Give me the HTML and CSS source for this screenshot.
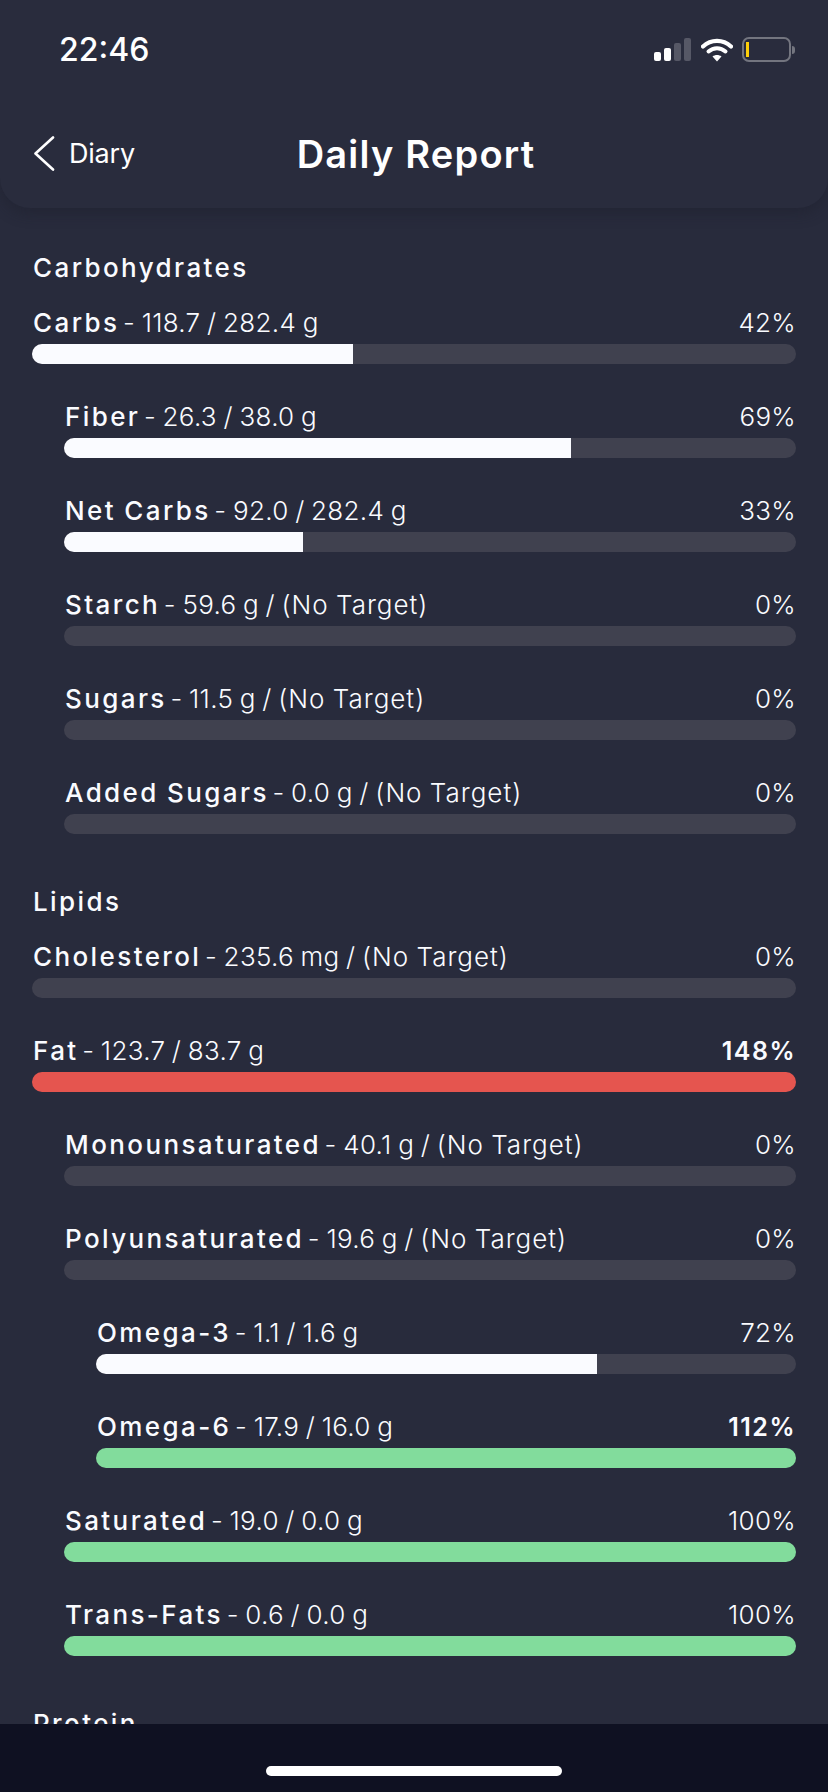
FILE: index.html
```html
<!DOCTYPE html>
<html lang="en">
<head>
<meta charset="utf-8">
<title>Daily Report</title>
<link rel="stylesheet" href="styles.css">
</head>
<body>
<div class="screen">
  <header class="header">
    <div class="status">
      <span class="time">22:46</span>
      <div class="status-icons">
        <div class="signal"><i class="b1"></i><i class="b2"></i><i class="b3"></i><i class="b4"></i></div>
        <svg class="wifi" width="32" height="25" viewBox="0 0 32 25"><path d="M2 9.500C10 2 22 2 30 9.500" fill="none" stroke="#fff" stroke-width="4.200" stroke-linecap="round"/><path d="M7.500 14.500C12.500 10 19.500 10 24.500 14.500" fill="none" stroke="#fff" stroke-width="4" stroke-linecap="round"/><path d="M16 24.500L11.500 19.500C14 17.500 18 17.500 20.500 19.500Z" fill="#fff"/></svg>
        <div class="battery"><div class="battery-body"><i class="battery-level"></i></div><i class="battery-nub"></i></div>
      </div>
    </div>
    <div class="nav">
      <div class="back">
        <svg width="22" height="35" viewBox="0 0 22 35"><path d="M20 1.500L2.500 17.500L20 33.500" fill="none" stroke="#fff" stroke-width="2.600" stroke-linecap="round" stroke-linejoin="round"/></svg>
        <span>Diary</span>
      </div>
      <h1 class="title">Daily Report</h1>
    </div>
  </header>
  <main class="content">
    <section class="section">
      <h2 class="section-title">Carbohydrates</h2>
      <div class="row"><div class="label"><span><b>Carbs</b> - 118.7 / 282.4 g</span><span>42%</span></div><div class="track"><div class="fill" style="width:42%"></div></div></div>
      <div class="row l1"><div class="label"><span><b>Fiber</b> - 26.3 / 38.0 g</span><span>69%</span></div><div class="track"><div class="fill" style="width:69.2%"></div></div></div>
      <div class="row l1"><div class="label"><span><b>Net Carbs</b> - 92.0 / 282.4 g</span><span>33%</span></div><div class="track"><div class="fill" style="width:32.6%"></div></div></div>
      <div class="row l1"><div class="label"><span><b>Starch</b> - 59.6 g / <span class="nt">(No Target)</span></span><span>0%</span></div><div class="track"></div></div>
      <div class="row l1"><div class="label"><span><b>Sugars</b> - 11.5 g / <span class="nt">(No Target)</span></span><span>0%</span></div><div class="track"></div></div>
      <div class="row l1"><div class="label"><span><b>Added Sugars</b> - 0.0 g / <span class="nt">(No Target)</span></span><span>0%</span></div><div class="track"></div></div>
    </section>
    <section class="section">
      <h2 class="section-title">Lipids</h2>
      <div class="row"><div class="label"><span><b>Cholesterol</b> - 235.6 mg / <span class="nt">(No Target)</span></span><span>0%</span></div><div class="track"></div></div>
      <div class="row"><div class="label"><span><b>Fat</b> - 123.7 / 83.7 g</span><b class="over">148%</b></div><div class="track"><div class="fill red" style="width:100%"></div></div></div>
      <div class="row l1"><div class="label"><span><b>Monounsaturated</b> - 40.1 g / <span class="nt">(No Target)</span></span><span>0%</span></div><div class="track"></div></div>
      <div class="row l1"><div class="label"><span><b>Polyunsaturated</b> - 19.6 g / <span class="nt">(No Target)</span></span><span>0%</span></div><div class="track"></div></div>
      <div class="row l2"><div class="label"><span><b>Omega-3</b> - 1.1 / 1.6 g</span><span>72%</span></div><div class="track"><div class="fill" style="width:71.5%"></div></div></div>
      <div class="row l2"><div class="label"><span><b>Omega-6</b> - 17.9 / 16.0 g</span><b class="over">112%</b></div><div class="track"><div class="fill green" style="width:100%"></div></div></div>
      <div class="row l1"><div class="label"><span><b>Saturated</b> - 19.0 / 0.0 g</span><span>100%</span></div><div class="track"><div class="fill green" style="width:100%"></div></div></div>
      <div class="row l1"><div class="label"><span><b>Trans-Fats</b> - 0.6 / 0.0 g</span><span>100%</span></div><div class="track"><div class="fill green" style="width:100%"></div></div></div>
    </section>
    <section class="section">
      <h2 class="section-title">Protein</h2>
    </section>
  </main>
  <footer class="home-bar"><i class="home-indicator"></i></footer>
</div>
</body>
</html>
```

FILE: styles.css
```css
* { box-sizing: border-box; }
html, body { margin: 0; padding: 0; background: #282b3c; }
body { font-family: "Inter", "Liberation Sans", sans-serif; color: #fafbff; }
.screen { width: 828px; height: 1792px; display: flex; flex-direction: column; overflow: hidden; background: #282b3c; }

.header { height: 208px; flex: none; background: #292c3d; border-radius: 0 0 30px 30px; box-shadow: 0 6px 14px rgba(28, 30, 44, .45); position: relative; z-index: 1; }
.status { height: 118px; display: flex; justify-content: space-between; align-items: flex-start; padding: 30px 33px 0 59px; }
.time { font-size: 32px; line-height: 40px; font-weight: 500; color: #fff; }
.status-icons { display: flex; align-items: flex-start; margin-top: 7px; }
.signal { display: flex; align-items: flex-end; gap: 3px; height: 23px; margin-top: 1px; }
.signal i { display: block; width: 7px; border-radius: 2px; background: #fff; }
.signal .b1 { height: 9px; }
.signal .b2 { height: 13px; }
.signal .b3 { height: 18px; background: #565866; }
.signal .b4 { height: 23px; background: #565866; }
.wifi { margin-left: 10px; }
.battery { display: flex; align-items: center; margin-left: 9px; height: 25px; }
.battery-body { width: 49px; height: 25px; border: 2px solid #73757f; border-radius: 7px; padding: 3px 2px; }
.battery-level { display: block; width: 3px; height: 15px; background: #fdcf0a; }
.battery-nub { display: block; width: 3px; height: 8px; margin-left: 1px; background: #73757f; border-radius: 0 3px 3px 0; }

.nav { height: 72px; position: relative; display: flex; align-items: center; justify-content: center; }
.back { position: absolute; left: 33px; top: 0; display: flex; align-items: center; height: 70px; gap: 14px; font-size: 27px; font-weight: 400; letter-spacing: -.2px; color: #fff; }
.title { margin: 0 0 0 4px; font-size: 38px; line-height: 44px; font-weight: 600; color: #fff; letter-spacing: 1.200px; }

.content { flex: 1; min-height: 0; overflow: hidden; padding: 42px 32px 0; }
.section { padding-bottom: 16px; }
.section-title { margin: 0 0 18px; font-size: 26px; line-height: 36px; font-weight: 500; letter-spacing: 2.400px; padding-left: 1px; }
.row { margin-bottom: 34px; }
.row.l1 { padding-left: 32px; }
.row.l2 { padding-left: 64px; }
.label { height: 40px; padding: 0 0 2px 1px; display: flex; justify-content: space-between; align-items: center; font-size: 26px; line-height: 36px; font-weight: 300; letter-spacing: .3px; word-spacing: -1px; white-space: nowrap; }
.label b { font-weight: 500; letter-spacing: 2.400px; margin-right: -3px; }
.label .over { font-weight: 600; font-size: 25px; letter-spacing: 1.500px; margin-right: 0; }
.nt { letter-spacing: 1px; }
.track { height: 20px; border-radius: 10px; background: #40414f; overflow: hidden; }
.fill { height: 100%; background: #fafbff; }
.fill.red { background: #e5554f; }
.fill.green { background: #82dc9c; }

.home-bar { height: 68px; flex: none; background: #0f1122; display: flex; justify-content: center; padding-top: 42px; position: relative; z-index: 1; }
.home-indicator { display: block; width: 296px; height: 10px; border-radius: 5px; background: #fff; }
```
